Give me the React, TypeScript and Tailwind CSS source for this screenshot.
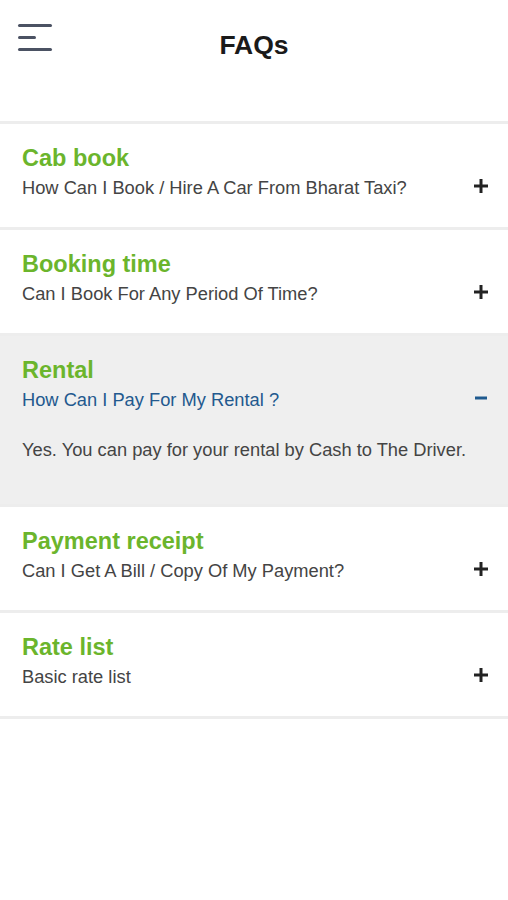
import { useState } from "react";

type Faq = { title: string; question: string; answer: string };

const faqs: Faq[] = [
  { title: "Cab book", question: "How Can I Book / Hire A Car From Bharat Taxi?", answer: "You can book a cab from the app or call our support." },
  { title: "Booking time", question: "Can I Book For Any Period Of Time?", answer: "Yes, you can book for any period of time." },
  { title: "Rental", question: "How Can I Pay For My Rental ?", answer: "Yes. You can pay for your rental by Cash to The Driver." },
  { title: "Payment receipt", question: "Can I Get A Bill / Copy Of My Payment?", answer: "Yes, a bill is sent after every ride." },
  { title: "Rate list", question: "Basic rate list", answer: "Rates depend on the car type and distance." },
];

const PlusIcon = () => (
  <svg width="14" height="14" viewBox="0 0 14 14" fill="none" stroke="#222" strokeWidth="3">
    <line x1="7" y1="0" x2="7" y2="14" />
    <line x1="0" y1="7" x2="14" y2="7" />
  </svg>
);

const MinusIcon = () => (
  <svg width="12" height="14" viewBox="0 0 12 14" fill="none" stroke="#1f5a8f" strokeWidth="3">
    <line x1="0" y1="7" x2="12" y2="7" />
  </svg>
);

export default function App() {
  const [open, setOpen] = useState<number | null>(2);

  return (
    <div className="min-h-[900px] bg-white font-['Liberation_Sans',Arial,sans-serif]">
      {/* Header */}
      <div className="flex h-[121px] items-start">
        <div className="w-[70px] pl-[18px] pt-[24px]">
          <div className="flex flex-col gap-[9px]">
            <span className="block h-[3px] w-[34px] rounded-full bg-[#4b5263]" />
            <span className="block h-[3px] w-[18px] rounded-full bg-[#4b5263]" />
            <span className="block h-[3px] w-[34px] rounded-full bg-[#4b5263]" />
          </div>
        </div>
        <h1 className="flex-1 pt-[29px] text-center text-[26.5px] font-bold leading-[32px] text-[#1a1a1a]">FAQs</h1>
        <div className="w-[70px]" />
      </div>

      <div className="border-t-[3px] border-[#ededed]">
        {faqs.map((f, i) => {
          const isOpen = open === i;
          return (
            <div
              key={f.title}
              onClick={() => setOpen(isOpen ? null : i)}
              className={`cursor-pointer border-b-[3px] border-[#ededed] pl-[22px] pr-[20px] pt-[21px] ${isOpen ? "bg-[#efefef] pb-[44px]" : "bg-white pb-[29px]"}`}
            >
              <div className="text-[23.5px] font-bold leading-[26px] text-[#6bb52c]">{f.title}</div>
              <div className="mt-[7px] flex items-center justify-between">
                <span className={`text-[18.3px] leading-[20px] ${isOpen ? "text-[#23598e]" : "text-[#444]"}`}>{f.question}</span>
                <span className="-mt-[5px] flex w-[14px] justify-center">{isOpen ? <MinusIcon /> : <PlusIcon />}</span>
              </div>
              {isOpen && (
                <p className="mt-[30px] text-[18.3px] leading-[20px] text-[#444]">{f.answer}</p>
              )}
            </div>
          );
        })}
      </div>
    </div>
  );
}
